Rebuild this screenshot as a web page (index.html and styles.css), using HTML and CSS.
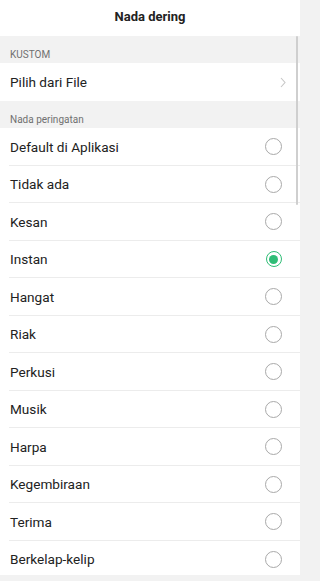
FILE: index.html
```html
<!DOCTYPE html>
<html>
<head>
<meta charset="utf-8">
<link rel="stylesheet" href="styles.css">
</head>
<body>
<div class="screen">
  <header class="title">Nada dering</header>
  <div class="content">
    <div class="section-head">KUSTOM</div>
    <div class="row nav-row">
      <span class="label">Pilih dari File</span>
      <svg class="chevron" width="6" height="11" viewBox="0 0 6 11"><path d="M1 1 L5 5.5 L1 10" fill="none" stroke="#c6c6c6" stroke-width="1.1"/></svg>
    </div>
    <div class="section-head">Nada peringatan</div>
    <ul class="list">
      <li class="row"><span class="label">Default di Aplikasi</span><span class="radio"></span></li>
      <li class="row"><span class="label">Tidak ada</span><span class="radio"></span></li>
      <li class="row"><span class="label">Kesan</span><span class="radio"></span></li>
      <li class="row"><span class="label">Instan</span><span class="radio checked"></span></li>
      <li class="row"><span class="label">Hangat</span><span class="radio"></span></li>
      <li class="row"><span class="label">Riak</span><span class="radio"></span></li>
      <li class="row"><span class="label">Perkusi</span><span class="radio"></span></li>
      <li class="row"><span class="label">Musik</span><span class="radio"></span></li>
      <li class="row"><span class="label">Harpa</span><span class="radio"></span></li>
      <li class="row"><span class="label">Kegembiraan</span><span class="radio"></span></li>
      <li class="row"><span class="label">Terima</span><span class="radio"></span></li>
      <li class="row last"><span class="label">Berkelap-kelip</span><span class="radio"></span></li>
    </ul>
    <div class="scrollbar"></div>
  </div>
</div>
</body>
</html>
```
FILE: styles.css
```css
* { box-sizing: border-box; }
html, body {
  margin: 0;
  padding: 0;
  background: #f2f2f2;
  font-family: Roboto, "Noto Sans", sans-serif;
  color: #222;
}
.screen {
  width: 300px;
  height: 581px;
  overflow: hidden;
  background: #f2f2f2;
}
.title {
  height: 36px;
  background: #fff;
  text-align: center;
  font-size: 13px;
  font-weight: 700;
  color: #222;
  line-height: 33px;
  padding-bottom: 3px;
}
.content {
  position: relative;
}
.section-head {
  height: 27px;
  padding: 13px 10px 2px;
  font-size: 10px;
  line-height: 12px;
  color: #707070;
  background: #f2f2f2;
}
.row {
  display: flex;
  align-items: center;
  justify-content: space-between;
  background: #fff;
  padding: 0 18px 0 10px;
  font-size: 13.6px;
}
.nav-row {
  height: 38px;
  padding-right: 14px;
}
.list {
  list-style: none;
  margin: 0;
  padding: 0;
  background: #fff;
}
.list .row {
  height: 37.5px;
  position: relative;
}
.list .row::after {
  content: "";
  position: absolute;
  left: 9px;
  right: 0;
  bottom: 0;
  height: 1px;
  background: #ececec;
}
.list .row.last {
  height: 34px;
  padding-top: 3px;
}
.list .row.last::after { display: none; }
.label {
  color: #222;
}
.radio {
  width: 17px;
  height: 17px;
  border: 1px solid #a9a9a9;
  border-radius: 50%;
  flex: none;
}
.radio.checked {
  width: 16px;
  height: 16px;
  margin-right: 0.5px;
  border: 1.5px solid #2fbd76;
  position: relative;
}
.radio.checked::after {
  content: "";
  position: absolute;
  left: 50%;
  top: 50%;
  width: 9px;
  height: 9px;
  margin: -4.5px 0 0 -4.5px;
  border-radius: 50%;
  background: #2fbd76;
}
.scrollbar {
  position: absolute;
  top: 0;
  right: 2px;
  width: 2px;
  height: 169px;
  background: #cfcfcf;
  border-radius: 1px;
}
```
